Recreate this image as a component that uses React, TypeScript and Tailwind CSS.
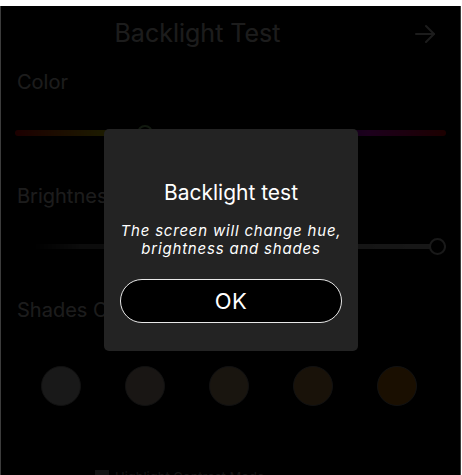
import React from "react";

const font = { fontFamily: "Inter, 'Noto Sans', sans-serif" };

export default function App() {
  const shades = ["#e0e0e0", "#dfcab6", "#dfba8c", "#e4a254", "#ec8c0a"];
  return (
    <div className="w-[462px] h-[475px] overflow-hidden bg-white" style={font}>
      <div className="relative mt-[6px] h-[469px] w-[461px] bg-black border-l border-r border-[#3c3c3c] overflow-hidden">
        {/* header */}
        <div className="flex h-[56px] items-center">
          <div className="flex-1 text-center text-[25px] text-white">Backlight Test</div>
          <div className="w-[66px] flex items-center">
            <svg width="24" height="24" viewBox="0 0 24 24" fill="none" stroke="white" strokeWidth="2" strokeLinecap="round" strokeLinejoin="round" className="ml-[19px]">
              <path d="M3 12h18" />
              <path d="M13 4l8 8-8 8" />
            </svg>
          </div>
        </div>
        {/* Color */}
        <div className="h-[40px] flex items-center pl-[16px] text-[20px] text-white">Color</div>
        <div className="h-[74px] pt-[28px] px-[14px]">
          <div className="relative h-[6px] rounded-full bg-[linear-gradient(to_right,#ff0000,#ffff00_22%,#00ff00_38%,#00ffff_52%,#0000ff_68%,#ff00ff_82%,#ff0000)]">
            <div className="absolute left-[122px] top-[-5px] h-[16px] w-[16px] rounded-full border-2 border-[#9ee08a] bg-black" />
          </div>
        </div>
        {/* Brightness */}
        <div className="h-[40px] flex items-center pl-[16px] text-[20px] text-white">Brightness</div>
        <div className="h-[74px] pt-[28px] px-[14px]">
          <div className="relative h-[5px] rounded-full bg-[linear-gradient(to_right,#000000,#000000_4%,#6a6a6a_15%,#d8d8d8)]">
            <div className="absolute right-[0px] top-[-6px] h-[17px] w-[17px] rounded-full border-2 border-[#e0e0e0] bg-black" />
          </div>
        </div>
        {/* Shades */}
        <div className="h-[40px] flex items-center pl-[16px] text-[20px] text-white">Shades Of White</div>
        <div className="mt-[36px] flex gap-[44px] pl-[40px]">
          {shades.map((c) => (
            <div key={c} className="h-[40px] w-[40px] rounded-full border border-[#999999]" style={{ backgroundColor: c }} />
          ))}
        </div>
        <div className="mt-[64px] flex items-start gap-[6px] pl-[94px]">
          <div className="h-[14px] w-[14px] bg-[#aaaaaa]" />
          <div className="text-[13px] leading-[14px] text-[#bbbbbb]">Highlight Contrast Mode</div>
        </div>

        {/* overlay */}
        <div className="absolute inset-0 bg-black/[0.89]" />

        {/* modal */}
        <div className="absolute left-[103px] top-[123px] w-[254px] h-[222px] rounded-[5px] bg-[#232323] flex flex-col items-center pt-[52px] pb-[28px]">
          <div className="h-[24px] leading-[24px] text-[21px] text-white">Backlight test</div>
          <div className="mt-[17px] text-center italic text-[15px] leading-[18px] tracking-[0.8px] text-white">
            The screen will change hue,
            <br />
            brightness and shades
          </div>
          <button className="mt-[21px] h-[44px] w-[222px] rounded-full border border-[#e8e8e8] bg-black text-[22px] tracking-[0.5px] text-white" style={font}>
            OK
          </button>
        </div>
      </div>
    </div>
  );
}
